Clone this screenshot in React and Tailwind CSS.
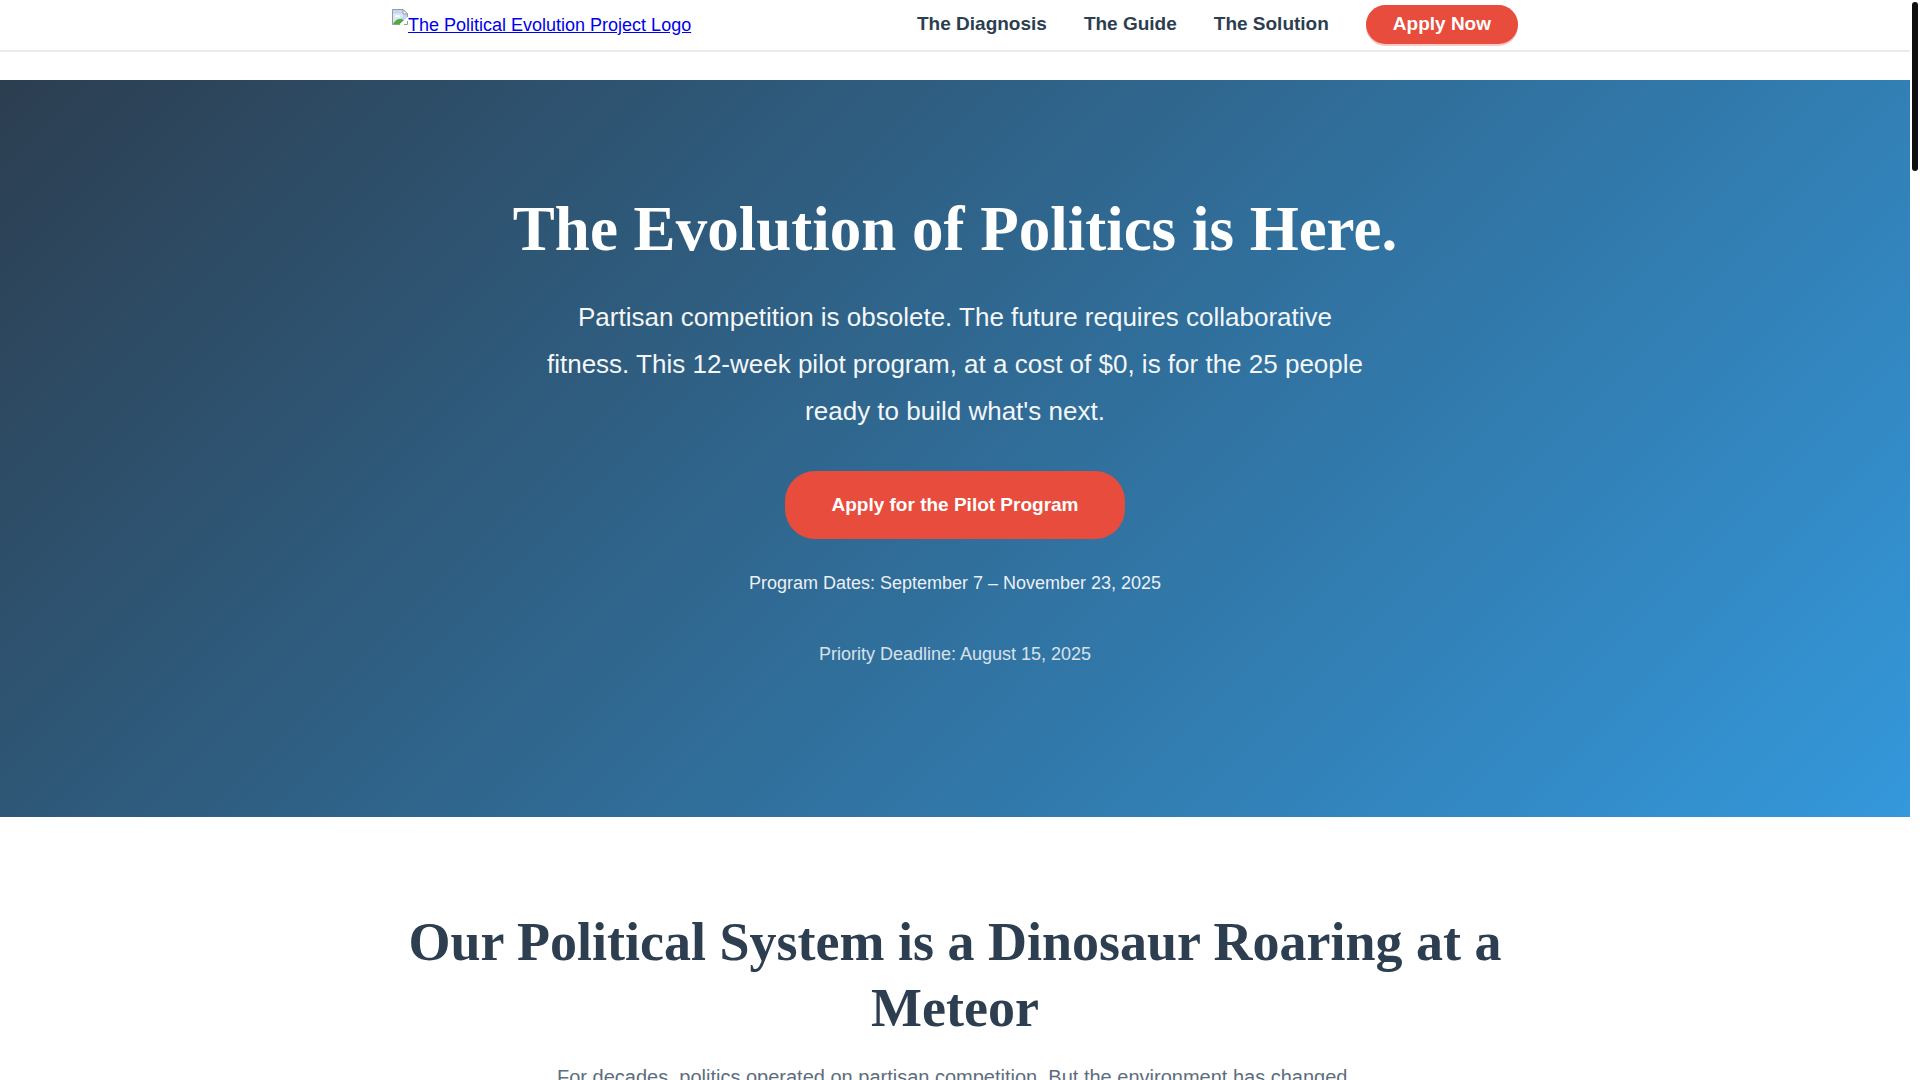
const navLinks = [
  { label: 'The Diagnosis', href: '#diagnosis' },
  { label: 'The Guide', href: '#guide' },
  { label: 'The Solution', href: '#solution' },
]

function BrokenImage() {
  return (
    <svg width="16" height="16" viewBox="0 0 16 16" className="shrink-0" aria-hidden="true">
      <path d="M0.5 0.5H11L15.5 5V8L7.5 15.5H0.5Z" fill="#c3d6f6" />
      <path d="M1 4.5H11V8L8 9.5L1 13Z" fill="#dbe6fa" />
      <path d="M1 15C3 11.5 6 9.5 9 10L12 11L7.5 15Z" fill="#4caf32" />
      <path d="M3 7.5C3 6 5 5.5 5.5 6.5C6.5 5.5 8 6.5 7.5 8H3Z" fill="#fff" />
      <path d="M16 8L7.5 16H11L16 11.5Z" fill="#fff" />
      <path d="M15.5 8V5L11 0.5H0.5V15.5H8" fill="none" stroke="#9a9a9a" />
      <path d="M11 0.5V5H15.5Z" fill="#fff" stroke="#9a9a9a" />
      <path d="M12 15.5H15.5V12" fill="none" stroke="#9a9a9a" />
    </svg>
  )
}

function Header() {
  return (
    <header className="border-b-2 border-[#ebebeb] bg-white">
      <div className="mx-auto flex h-[50px] max-w-[1200px] items-center justify-between px-[37px] pb-px">
        <a href="#top" className="flex text-[18px] leading-8 text-[#0000ee]">
          <BrokenImage />
          <span className="underline">The Political Evolution Project Logo</span>
        </a>
        <nav className="flex items-center gap-[37px] text-[19px] font-bold text-[#2c3e50]">
          {navLinks.map(link => (
            <a key={link.href} href={link.href}>{link.label}</a>
          ))}
          <a href="#apply" className="flex h-[39px] items-center rounded-[20px] bg-[#e74c3c] px-[27px] text-white shadow-[0_2px_0_#f8c9c5]">
            Apply Now
          </a>
        </nav>
      </div>
    </header>
  )
}

function Hero() {
  return (
    <section className="bg-[linear-gradient(135deg,#2c3e50_0%,#3498db_100%)] px-9 pt-[110px] pb-[147px] text-center text-white">
      <h1 className="font-['Liberation_Serif',serif] text-[63px] leading-[78px] font-bold">
        The Evolution of Politics is Here.
      </h1>
      <p className="mx-auto mt-[26px] max-w-[820px] text-[26px] leading-[47px] opacity-95">
        Partisan competition is obsolete. The future requires collaborative fitness. This 12-week pilot program, at a cost of $0, is for the 25 people ready to build what's next.
      </p>
      <a href="#apply" className="mt-9 inline-flex h-[68px] items-center rounded-[30px] bg-[#e74c3c] px-[46px] text-[19px] font-bold">
        Apply for the Pilot Program
      </a>
      <p className="mt-7 text-[18px] leading-8 opacity-90">Program Dates: September 7 – November 23, 2025</p>
      <p className="mt-[39px] text-[18px] leading-8 opacity-80">Priority Deadline: August 15, 2025</p>
    </section>
  )
}

function Diagnosis() {
  return (
    <section id="diagnosis" className="mx-auto max-w-[1200px] px-[37px] pt-[92px] pb-24 text-center">
      <h2 className="font-['Liberation_Serif',serif] text-[54px] leading-[66px] font-bold text-[#2c3e50]">
        Our Political System is a Dinosaur Roaring at a Meteor
      </h2>
      <p className="mx-auto mt-[18px] max-w-[820px] text-[20px] leading-9 text-[#5d6d7e]">
        For decades, politics operated on partisan competition. But the environment has changed.
      </p>
    </section>
  )
}

export default function App() {
  return (
    <div id="top" className="min-h-screen bg-white pr-[10px] font-['Liberation_Sans',Arial,sans-serif]">
      <Header />
      <main className="pt-7">
        <Hero />
        <Diagnosis />
      </main>
      <div className="fixed top-[2px] right-[2px] h-[169px] w-[6px] rounded-full bg-[#0f0f0f]" />
    </div>
  )
}
